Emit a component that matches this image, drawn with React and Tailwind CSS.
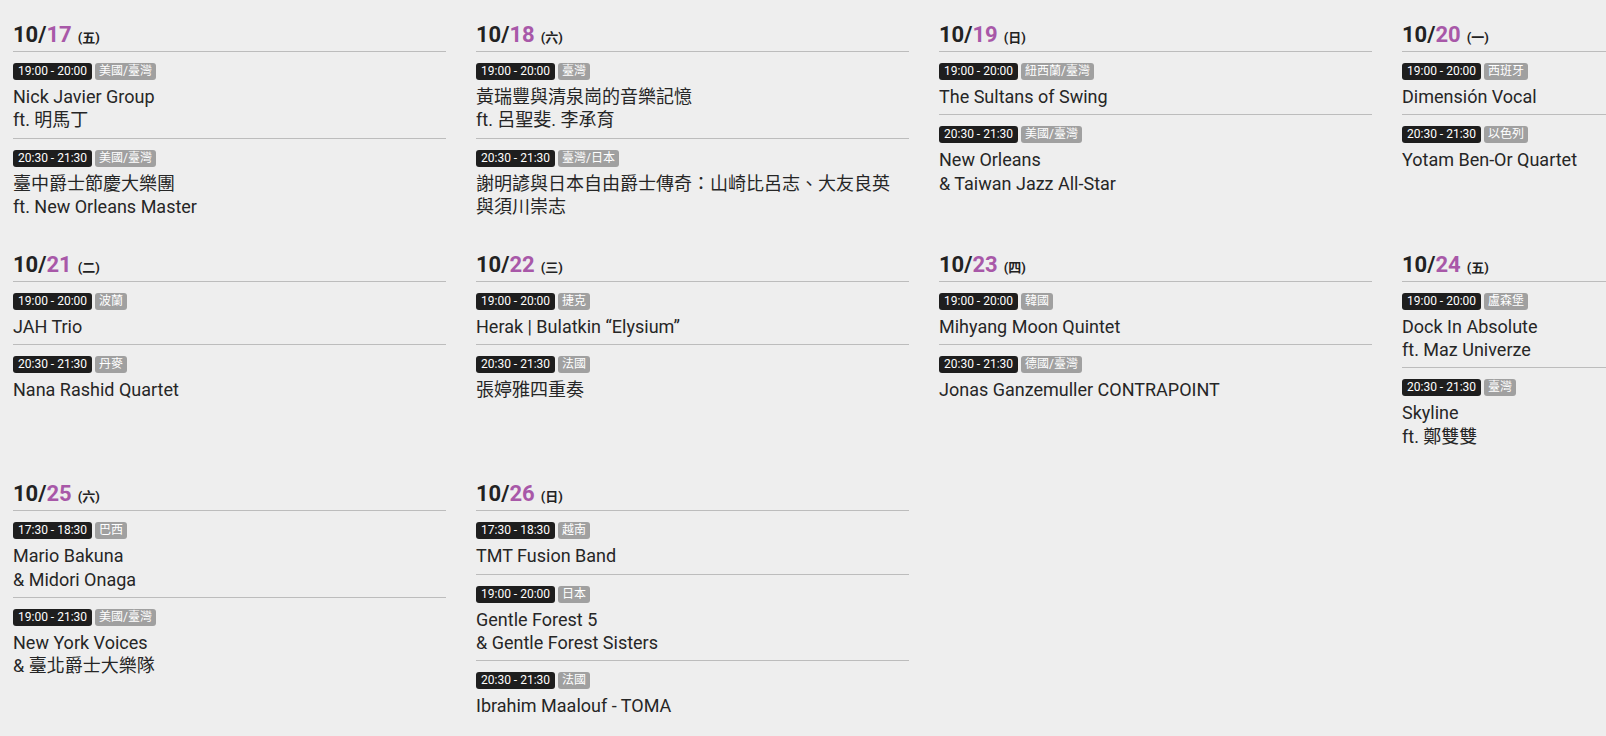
import React from "react";

const days = [
  {
    m: "10", d: "17", w: "五",
    events: [
      { time: "19:00 - 20:00", country: "美國/臺灣", name: ["Nick Javier Group", "ft. 明馬丁"] },
      { time: "20:30 - 21:30", country: "美國/臺灣", name: ["臺中爵士節慶大樂團", "ft. New Orleans Master"] },
    ],
  },
  {
    m: "10", d: "18", w: "六",
    events: [
      { time: "19:00 - 20:00", country: "臺灣", name: ["黃瑞豐與清泉崗的音樂記憶", "ft. 呂聖斐. 李承育"] },
      { time: "20:30 - 21:30", country: "臺灣/日本", name: ["謝明諺與日本自由爵士傳奇：山崎比呂志、大友良英", "與須川崇志"] },
    ],
  },
  {
    m: "10", d: "19", w: "日",
    events: [
      { time: "19:00 - 20:00", country: "紐西蘭/臺灣", name: ["The Sultans of Swing"] },
      { time: "20:30 - 21:30", country: "美國/臺灣", name: ["New Orleans", "& Taiwan Jazz All-Star"] },
    ],
  },
  {
    m: "10", d: "20", w: "一",
    events: [
      { time: "19:00 - 20:00", country: "西班牙", name: ["Dimensión Vocal"] },
      { time: "20:30 - 21:30", country: "以色列", name: ["Yotam Ben-Or Quartet"] },
    ],
  },
  {
    m: "10", d: "21", w: "二",
    events: [
      { time: "19:00 - 20:00", country: "波蘭", name: ["JAH Trio"] },
      { time: "20:30 - 21:30", country: "丹麥", name: ["Nana Rashid Quartet"] },
    ],
  },
  {
    m: "10", d: "22", w: "三",
    events: [
      { time: "19:00 - 20:00", country: "捷克", name: ["Herak | Bulatkin “Elysium”"] },
      { time: "20:30 - 21:30", country: "法國", name: ["張婷雅四重奏"] },
    ],
  },
  {
    m: "10", d: "23", w: "四",
    events: [
      { time: "19:00 - 20:00", country: "韓國", name: ["Mihyang Moon Quintet"] },
      { time: "20:30 - 21:30", country: "德國/臺灣", name: ["Jonas Ganzemuller CONTRAPOINT"] },
    ],
  },
  {
    m: "10", d: "24", w: "五",
    events: [
      { time: "19:00 - 20:00", country: "盧森堡", name: ["Dock In Absolute", "ft. Maz Univerze"] },
      { time: "20:30 - 21:30", country: "臺灣", name: ["Skyline", "ft. 鄭雙雙"] },
    ],
  },
  {
    m: "10", d: "25", w: "六",
    events: [
      { time: "17:30 - 18:30", country: "巴西", name: ["Mario Bakuna", "& Midori Onaga"] },
      { time: "19:00 - 21:30", country: "美國/臺灣", name: ["New York Voices", "& 臺北爵士大樂隊"] },
    ],
  },
  {
    m: "10", d: "26", w: "日",
    events: [
      { time: "17:30 - 18:30", country: "越南", name: ["TMT Fusion Band"] },
      { time: "19:00 - 20:00", country: "日本", name: ["Gentle Forest 5", "& Gentle Forest Sisters"] },
      { time: "20:30 - 21:30", country: "法國", name: ["Ibrahim Maalouf - TOMA"] },
    ],
  },
];

function EventItem({ value }) {
  return (
    <div className="border-t border-[#bcbcbc] pt-[11px] pb-[6px]">
      <div className="flex gap-[3px] h-[17px] mb-[5px]">
        <span className="bg-[#1e1e1e] text-white text-[12px] leading-[17px] px-[5px] rounded-[3px]">
          {value.time}
        </span>
        <span className="bg-[#a0a0a0] text-white text-[12px] leading-[17px] px-[4px] rounded-[3px]">
          {value.country}
        </span>
      </div>
      <div className="text-[18px] leading-[23.4px] text-[#262626]">
        {value.name.map((line, i) => (
          <div key={i}>{line}</div>
        ))}
      </div>
    </div>
  );
}

function Day({ day }) {
  return (
    <div>
      <div className="flex items-baseline h-[30px] leading-[28px] text-[#222]">
        <span className="text-[22px] font-bold">
          {day.m}/<span className="text-[#a858a8]">{day.d}</span>
        </span>
        <span className="ml-[6px] text-[13px] font-bold">({day.w})</span>
      </div>
      {day.events.map((value, index) => (
        <EventItem key={index} value={value} />
      ))}
    </div>
  );
}

export default function App() {
  return (
    <div
      className="h-screen overflow-hidden bg-[#eeeeee]"
      style={{ fontFamily: 'Roboto, "Noto Sans CJK TC", sans-serif' }}
    >
      <div className="pl-[13px] pt-[21px] grid grid-cols-[repeat(4,433px)] gap-x-[30px] gap-y-[26px] items-start">
        {days.map((day) => (
          <Day key={day.d} day={day} />
        ))}
      </div>
    </div>
  );
}
